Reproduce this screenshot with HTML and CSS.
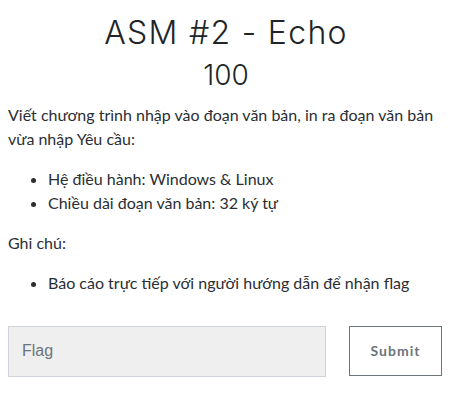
FILE: index.html
```html
<!DOCTYPE html>
<html lang="vi">
<head>
<meta charset="utf-8">
<link rel="stylesheet" href="styles.css">
</head>
<body>
<div class="challenge">
  <h2 class="challenge-name">ASM #2 - Echo</h2>
  <h3 class="challenge-value">100</h3>
  <div class="challenge-desc">
    <p>Viết chương trình nhập vào đoạn văn bản, in ra đoạn văn bản vừa nhập Yêu cầu:</p>
    <ul>
      <li>Hệ điều hành: Windows &amp; Linux</li>
      <li>Chiều dài đoạn văn bản: 32 ký tự</li>
    </ul>
    <p>Ghi chú:</p>
    <ul>
      <li>Báo cáo trực tiếp với người hướng dẫn để nhận flag</li>
    </ul>
  </div>
  <form class="flag-form">
    <input class="flag-input" type="text" placeholder="Flag">
    <button class="flag-submit" type="button">Submit</button>
  </form>
</div>
</body>
</html>
```

FILE: styles.css
```css
html, body {
  margin: 0;
  padding: 0;
  background: #fff;
}
body {
  font-family: "Lato", "Liberation Sans", sans-serif;
  font-size: 16px;
  line-height: 1.5;
  color: #2b2e33;
}
.challenge {
  padding: 14px 8px 0 8px;
}
.challenge-name {
  margin: 0;
  text-align: center;
  font-family: "Inter", "Open Sans", sans-serif;
  font-weight: 300;
  font-size: 32px;
  line-height: 1.2;
  letter-spacing: 1.3px;
  color: #212529;
}
.challenge-value {
  margin: 7px 0 10px 0;
  text-align: center;
  font-family: "Inter", "Open Sans", sans-serif;
  font-weight: 300;
  font-size: 28px;
  line-height: 1.2;
  color: #212529;
}
.challenge-desc p {
  margin: 0 0 16px 0;
}
.challenge-desc ul {
  margin: 0 0 16px 0;
  padding-left: 40px;
}
.flag-form {
  display: flex;
  align-items: flex-start;
  gap: 23px;
  margin-top: 31px;
}
.flag-input {
  box-sizing: border-box;
  width: 318px;
  height: 51px;
  padding: 0 13px;
  border: 1px solid #ced4da;
  background: #efefef;
  font-family: "Liberation Sans", Arial, sans-serif;
  font-size: 16px;
  color: #495057;
  outline: none;
}
.flag-input::placeholder {
  color: #6c757d;
}
.flag-submit {
  box-sizing: border-box;
  width: 93px;
  height: 50px;
  border: 1px solid #6c757d;
  background: #fff;
  font-family: "Lato", "Liberation Sans", sans-serif;
  font-weight: 700;
  font-size: 14px;
  letter-spacing: 1px;
  color: #6c757d;
}
```
